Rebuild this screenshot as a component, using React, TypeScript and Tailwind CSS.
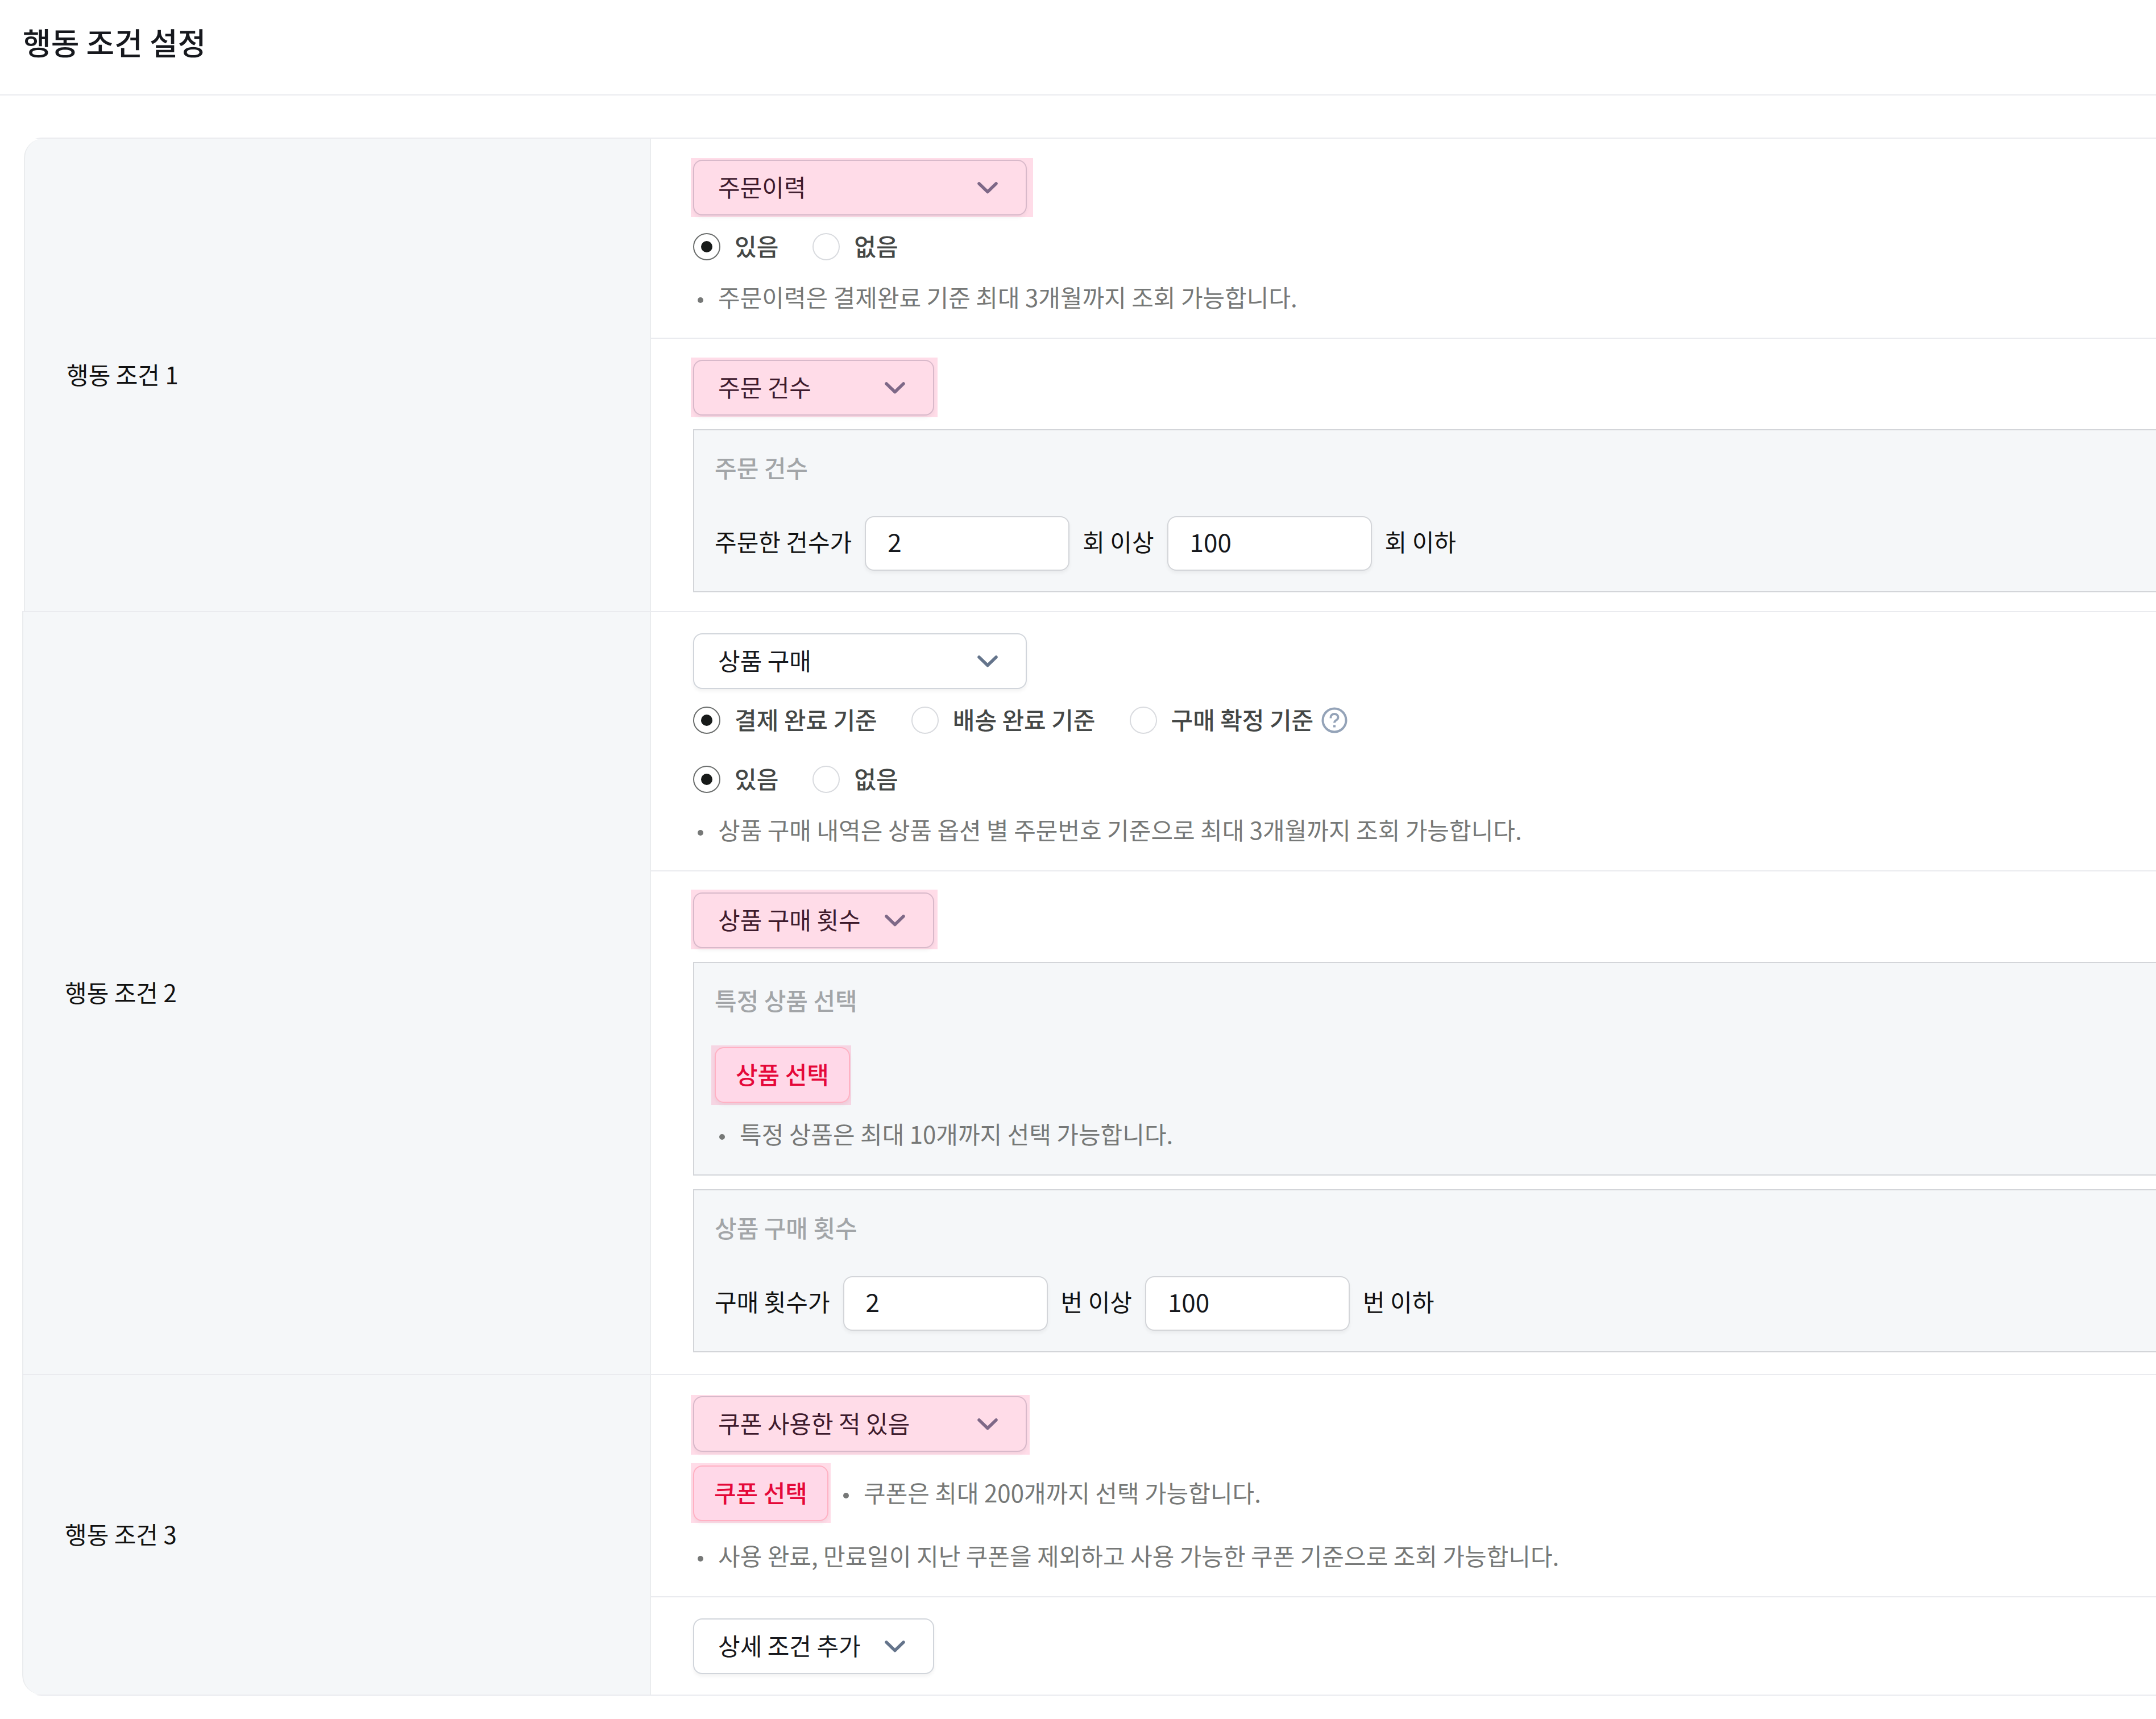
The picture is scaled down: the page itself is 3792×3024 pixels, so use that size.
import type { ReactNode } from "react";

const FONT =
  "font-['Noto_Sans_CJK_KR','Noto_Sans',sans-serif]";

function Marked({ mark, children }: { mark?: string; children: ReactNode }) {
  return (
    <div className="relative w-fit">
      {children}
      {mark && (
        <span
          aria-hidden="true"
          className={`pointer-events-none absolute bg-[#ff3278]/17 ${mark}`}
        />
      )}
    </div>
  );
}

function Dropdown({
  label,
  value,
  size,
  mark,
}: {
  label: string;
  value: string;
  size: "wide" | "narrow";
  mark?: string;
}) {
  return (
    <Marked mark={mark}>
      <select
        aria-label={label}
        defaultValue={value}
        className={`block h-[98px] appearance-none rounded-[16px] border-2 border-[#d1d5db] bg-white pr-[96px] pb-1 pl-[42px] text-[42px] leading-[60px] text-[#16181d] shadow-[0_4px_6px_rgba(0,0,0,0.05)] ${
          size === "wide" ? "w-[587px]" : "w-[424px]"
        }`}
      >
        <option>{value}</option>
      </select>
      <svg
        aria-hidden="true"
        viewBox="0 0 36 21"
        className="pointer-events-none absolute top-[39px] right-[51px] h-[21px] w-9"
        fill="none"
        stroke="#64748b"
        strokeWidth="5.500"
        strokeLinecap="round"
        strokeLinejoin="round"
      >
        <path d="M3 3 18 17.500 33 3" />
      </svg>
    </Marked>
  );
}

function PickButton({ children, mark }: { children: string; mark: string }) {
  return (
    <Marked mark={mark}>
      <button
        type="button"
        className="block h-[98px] w-[238px] rounded-[16px] border-2 border-[#ffccd3] bg-[#fffaff] pb-1 text-[42px] leading-[60px] font-medium text-[#e0002d] shadow-[0_4px_6px_rgba(0,0,0,0.05)]"
      >
        {children}
      </button>
    </Marked>
  );
}

function Radio({
  name,
  label,
  checked = false,
}: {
  name: string;
  label: string;
  checked?: boolean;
}) {
  return (
    <label className="flex items-center gap-[25px] text-[42px] leading-[60px] font-medium text-[#444746]">
      <input
        type="radio"
        name={name}
        defaultChecked={checked}
        className="grid size-12 appearance-none place-items-center rounded-full border-2 border-[#d9dbdf] bg-white before:size-5 before:rounded-full checked:border-[#6b6e6d] checked:before:bg-[#171a19]"
      />
      <span className="pb-1">{label}</span>
    </label>
  );
}

function RadioRow({ children }: { children: ReactNode }) {
  return <div className="flex h-[104px] items-center gap-[60px]">{children}</div>;
}

function Note({ children }: { children: string }) {
  return (
    <p className="flex items-center text-[42px] leading-[64px] text-[#767877]">
      <span
        aria-hidden="true"
        className="mt-2 mr-[26px] ml-2 size-[10px] rounded-full bg-[#767877]"
      />
      <span className="pb-1">{children}</span>
    </p>
  );
}

function Box({ title, children }: { title: string; children: ReactNode }) {
  return (
    <div className="mt-6 border-2 border-r-0 border-[#d3d5d9] bg-[#f5f7f9] p-9">
      <h3 className="pb-1 text-[42px] leading-[58px] font-medium text-[#a2a5a8]">{title}</h3>
      {children}
    </div>
  );
}

function NumberInput({ value, label }: { value: string; label: string }) {
  return (
    <input
      type="text"
      inputMode="numeric"
      aria-label={label}
      defaultValue={value}
      className="h-24 w-[360px] rounded-[16px] border-2 border-[#d3d5d9] bg-white px-[38px] pb-2 text-[44px] leading-[60px] text-[#16181d] shadow-[0_4px_6px_rgba(0,0,0,0.05)]"
    />
  );
}

function RangeRow({ subject, unit }: { subject: string; unit: string }) {
  return (
    <div className="mt-[53px] flex items-center gap-[23px] text-[42px] leading-[60px] text-[#111]">
      <span className="pb-2">{subject}</span>
      <NumberInput value="2" label={`${subject} 최소`} />
      <span className="pb-2">{unit} 이상</span>
      <NumberInput value="100" label={`${subject} 최대`} />
      <span className="pb-2">{unit} 이하</span>
    </div>
  );
}

function Cell({ bottom = "pb-9", children }: { bottom?: string; children: ReactNode }) {
  return (
    <div className={`border-t-2 border-[#eaebef] pt-[37px] pl-[74px] first:border-t-0 ${bottom}`}>
      {children}
    </div>
  );
}

function Group({
  title,
  shape,
  children,
}: {
  title: string;
  shape: string;
  children: ReactNode;
}) {
  return (
    <section className="flex border-b-2 border-[#eaebef]">
      <div
        className={`flex shrink-0 items-center border-x-2 border-[#eaecee] bg-[#f5f7f9] pl-[73px] ${shape}`}
      >
        <h2 className="pb-1 text-[42px] leading-[60px] text-[#111]">{title}</h2>
      </div>
      <div className="min-w-0 flex-1">{children}</div>
    </section>
  );
}

export default function App() {
  return (
    <main className={`min-h-screen overflow-hidden bg-white ${FONT}`}>
      <header className="border-b-2 border-[#eaebef] px-10 pt-9 pb-[54px]">
        <h1 className="text-[54px] leading-[76px] font-medium text-[#16181d]">
          행동 조건 설정
        </h1>
      </header>

      <div className="pt-[74px] pl-[39px]">
        <div className="overflow-hidden rounded-l-[34px]">
          <div className="border-t-2 border-[#eaebef]">
            <Group title="행동 조건 1" shape="ml-[3px] w-[1103px] rounded-tl-[34px]">
              <Cell>
                <Dropdown
                  label="행동 조건 1"
                  value="주문이력"
                  size="wide"
                  mark="-left-1 -top-[3px] -right-[11px] -bottom-[3px]"
                />
                <div className="pt-[3px]">
                  <RadioRow>
                    <Radio name="order-history" label="있음" checked />
                    <Radio name="order-history" label="없음" />
                  </RadioRow>
                </div>
                <div className="pt-1">
                  <Note>주문이력은 결제완료 기준 최대 3개월까지 조회 가능합니다.</Note>
                </div>
              </Cell>
              <Cell bottom="pb-[33px]">
                <Dropdown
                  label="상세 조건"
                  value="주문 건수"
                  size="narrow"
                  mark="-left-1 -top-1 -right-[6px] -bottom-[3px]"
                />
                <Box title="주문 건수">
                  <RangeRow subject="주문한 건수가" unit="회" />
                </Box>
              </Cell>
            </Group>
          </div>

          <Group title="행동 조건 2" shape="w-[1106px]">
            <Cell>
              <Dropdown label="행동 조건 2" value="상품 구매" size="wide" />
              <div className="pt-[3px]">
                <RadioRow>
                  <Radio name="basis" label="결제 완료 기준" checked />
                  <Radio name="basis" label="배송 완료 기준" />
                  <div className="flex items-center gap-[14px]">
                    <Radio name="basis" label="구매 확정 기준" />
                    <button type="button" aria-label="도움말">
                      <svg
                        viewBox="0 0 46 46"
                        className="size-[46px]"
                        fill="none"
                        stroke="#94a3b8"
                        strokeLinecap="butt"
                        strokeLinejoin="round"
                      >
                        <circle cx="23" cy="23" r="20.500" strokeWidth="4" />
                        <path
                          d="M16.500 19.500v-1.500c0-3.600 2.700-6 6.500-6s6.500 2.400 6.500 5.800c0 2.800-1.600 4.200-3.600 5.400-2 1.200-2.900 2-2.900 4.300"
                          strokeWidth="3.800"
                        />
                        <path d="M23 31.500v4" strokeWidth="4" />
                      </svg>
                    </button>
                  </div>
                </RadioRow>
                <RadioRow>
                  <Radio name="purchase" label="있음" checked />
                  <Radio name="purchase" label="없음" />
                </RadioRow>
              </div>
              <div className="pt-1">
                <Note>
                  상품 구매 내역은 상품 옵션 별 주문번호 기준으로 최대 3개월까지 조회 가능합니다.
                </Note>
              </div>
            </Cell>
            <Cell bottom="pb-[38px]">
              <Dropdown
                label="상세 조건"
                value="상품 구매 횟수"
                size="narrow"
                mark="-left-1 -top-[5px] -right-[6px] -bottom-[2px]"
              />
              <Box title="특정 상품 선택">
                <div className="pt-[50px] pb-[22px]">
                  <PickButton mark="-left-[6px] -top-[3px] -right-[2px] -bottom-1">
                    상품 선택
                  </PickButton>
                </div>
                <Note>특정 상품은 최대 10개까지 선택 가능합니다.</Note>
              </Box>
              <Box title="상품 구매 횟수">
                <RangeRow subject="구매 횟수가" unit="번" />
              </Box>
            </Cell>
          </Group>

          <Group title="행동 조건 3" shape="w-[1106px] rounded-bl-[34px]">
            <Cell>
              <Dropdown
                label="행동 조건 3"
                value="쿠폰 사용한 적 있음"
                size="wide"
                mark="-left-1 -top-[2px] -right-[5px] -bottom-[5px]"
              />
              <div className="mt-6 flex items-center gap-[18px]">
                <PickButton mark="-left-1 -top-1 -right-1 -bottom-[3px]">쿠폰 선택</PickButton>
                <Note>쿠폰은 최대 200개까지 선택 가능합니다.</Note>
              </div>
              <div className="pt-7">
                <Note>
                  사용 완료, 만료일이 지난 쿠폰을 제외하고 사용 가능한 쿠폰 기준으로 조회 가능합니다.
                </Note>
              </div>
            </Cell>
            <Cell>
              <Dropdown label="상세 조건" value="상세 조건 추가" size="narrow" />
            </Cell>
          </Group>
        </div>
      </div>
    </main>
  );
}
